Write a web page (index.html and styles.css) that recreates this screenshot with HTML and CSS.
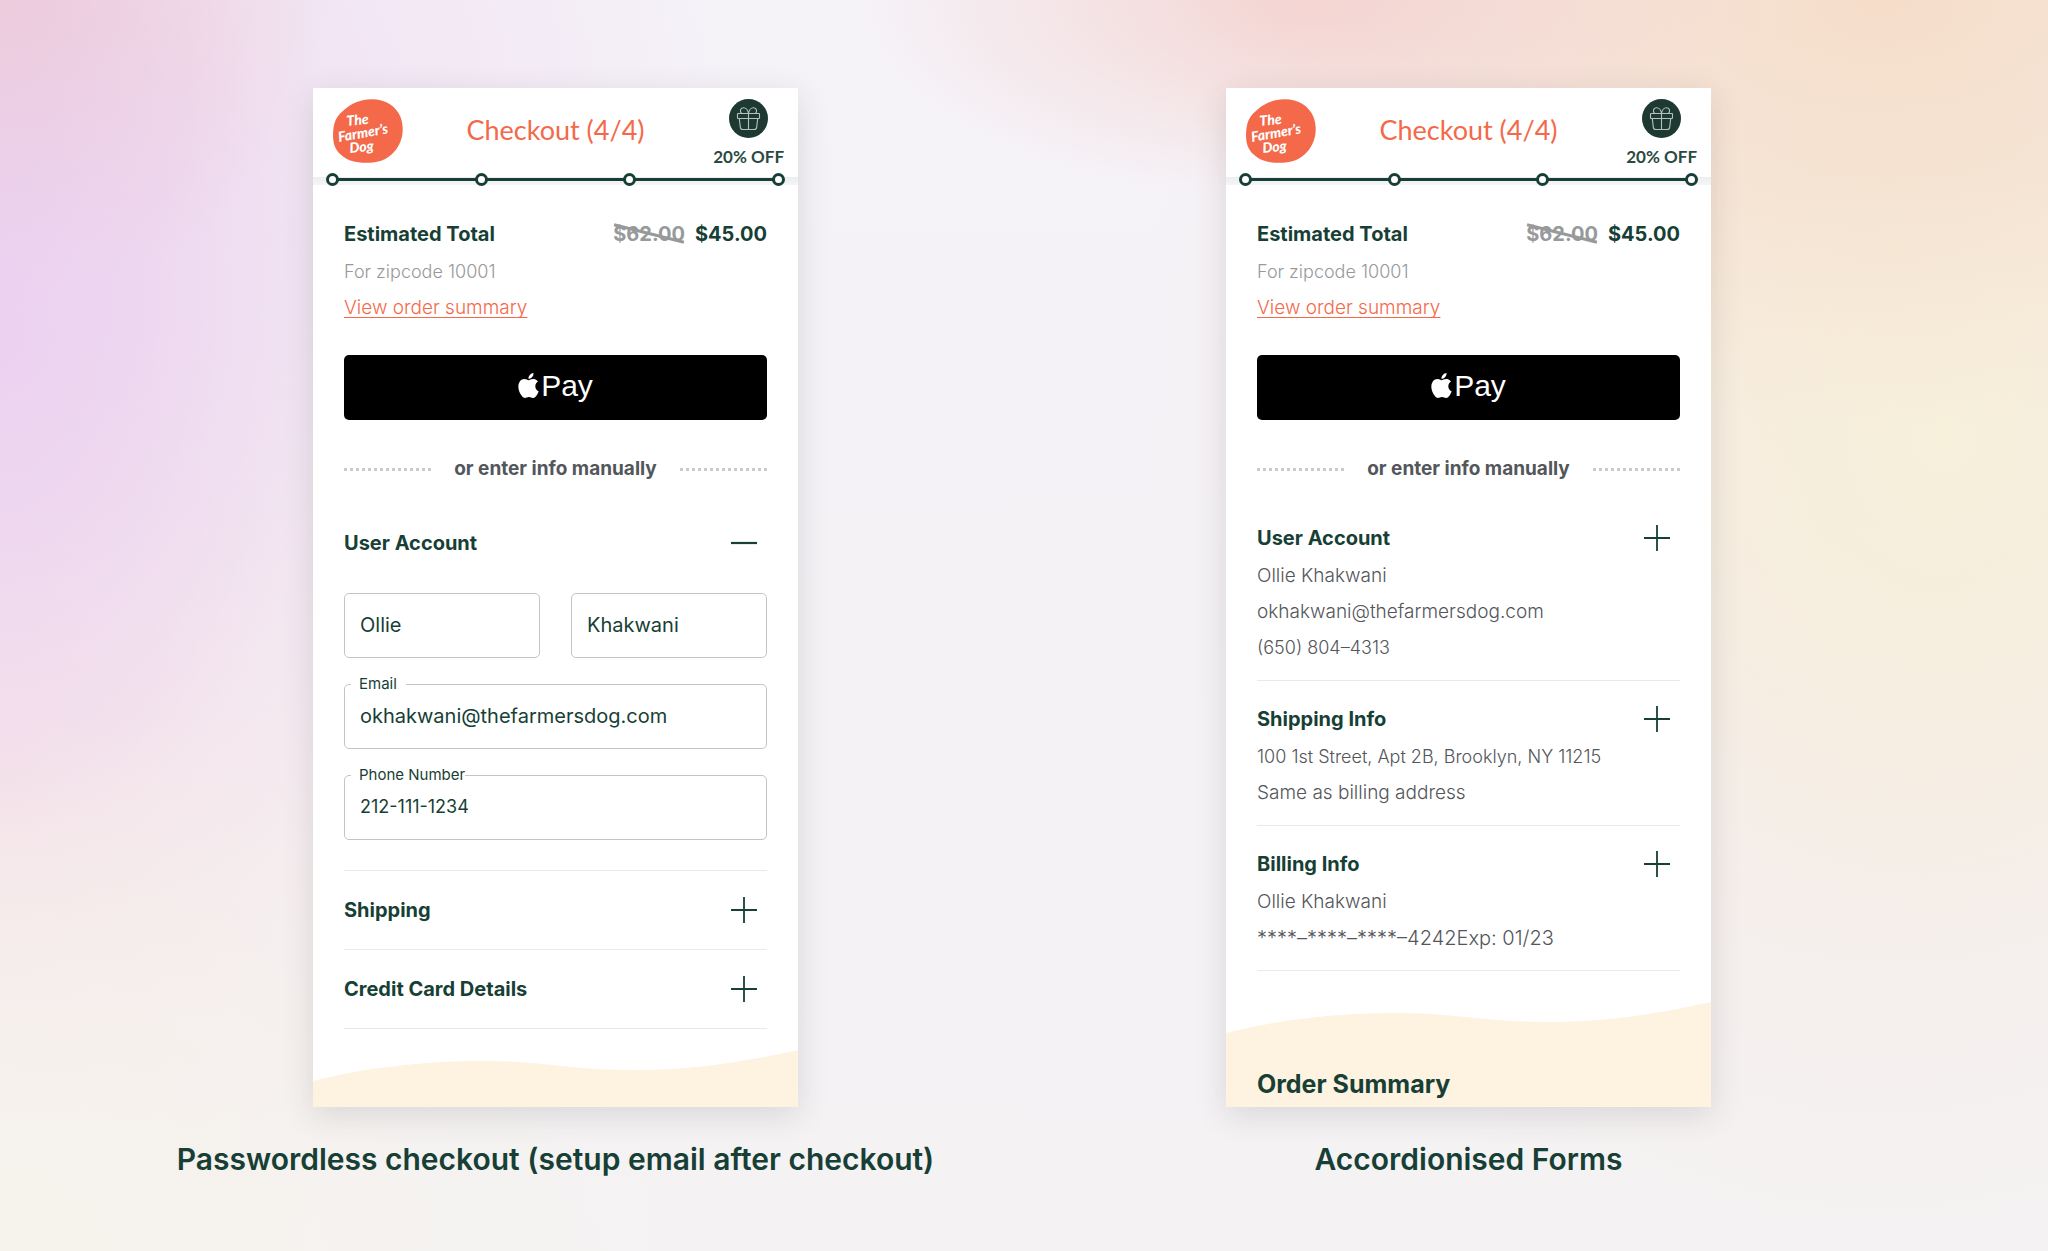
FILE: index.html
```
<!DOCTYPE html>
<html lang="en">

<head>
    <meta charset="UTF-8">
    <meta name="viewport" content="width=device-width, initial-scale=1.0">
    <title>Checkout</title>
    <link rel="stylesheet" href="styles.css">
</head>

<body>
    <!-- shared icons -->
    <svg class="sprite" aria-hidden="true">
        <symbol id="gift" viewBox="0 0 39 39">
            <circle cx="19.5" cy="19.5" r="19.5" fill="#1e3932" />
            <g fill="none" stroke="#b4c2bc" stroke-width="1.1" stroke-linejoin="round">
                <rect x="8.5" y="14.5" width="22" height="5" rx="0.6" />
                <path d="M10.3 19.5l1 8.6c.2 1.8 1 2.4 2.6 2.4h11.2c1.6 0 2.4-.6 2.6-2.4l1-8.6" />
                <path d="M19.5 14.5v16" />
                <path d="M19.5 14.3c-.5-3-2.5-5.8-5.2-5.6-2.9.2-3.8 3.3-1.8 5.6M19.5 14.3c.5-3 2.5-5.8 5.2-5.6 2.9.2 3.8 3.3 1.8 5.6" />
            </g>
        </symbol>
        <symbol id="apple" viewBox="2 0 20 24">
            <path fill="#fff" d="M12.152 6.896c-.948 0-2.415-1.078-3.96-1.04-2.04.027-3.91 1.183-4.961 3.014-2.117 3.675-.546 9.103 1.519 12.09 1.013 1.454 2.208 3.09 3.792 3.039 1.52-.065 2.09-.987 3.935-.987 1.831 0 2.35.987 3.96.948 1.637-.026 2.676-1.48 3.676-2.948 1.156-1.688 1.636-3.325 1.662-3.415-.039-.013-3.182-1.221-3.22-4.857-.026-3.04 2.48-4.494 2.597-4.559-1.429-2.09-3.623-2.324-4.39-2.376-2-.156-3.675 1.09-4.61 1.09zM15.53 3.83c.843-1.012 1.4-2.427 1.245-3.83-1.207.052-2.662.805-3.532 1.818-.78.896-1.454 2.338-1.273 3.714 1.338.104 2.715-.688 3.559-1.701" />
        </symbol>
        <symbol id="plus" viewBox="0 0 26 26">
            <path d="M0 13h26M13 0v26" stroke="#173f35" stroke-width="1.8" />
        </symbol>
        <symbol id="minus" viewBox="0 0 26 26">
            <path d="M0 13h26" stroke="#173f35" stroke-width="2.2" />
        </symbol>
        <symbol id="wave" viewBox="0 0 485 31" preserveAspectRatio="none">
            <path d="M0 31C50 18 110 11 170 11C205 11 228 14 250 16C275 19 300 20 325 20C385 20 440 10 485 0V31z" fill="#fef2e0" />
        </symbol>
    </svg>

    <main class="board">
        <section class="screen">
            <div class="card">
                <header class="top">
                    <div class="top-row">
                        <svg class="logo" viewBox="0 0 70 64">
                            <path d="M38 .3C52 0 63 7 67.5 18c4.5 12 2 26-6.5 35-7 8-16 10.800-28 10.800-10 0-19-2-25-8C1 50-.5 42 .2 32 1 21 5 16 11 11 19 4 28 .6 38 .3z" fill="#f3694a" />
                            <g class="logo-text">
                                <text x="14" y="27" transform="rotate(-6 14 27)">The</text>
                                <text x="6" y="43" transform="rotate(-10 6 43)">Farmer’s</text>
                                <text x="17" y="54" transform="rotate(-6 17 54)">Dog</text>
                            </g>
                        </svg>
                        <h2 class="top-title">Checkout (4/4)</h2>
                        <div class="offer">
                            <svg class="offer-icon"><use href="#gift" /></svg>
                            <span class="offer-text">20% OFF</span>
                        </div>
                    </div>
                    <div class="progress">
                        <ol class="steps">
                            <li></li>
                            <li></li>
                            <li></li>
                            <li></li>
                        </ol>
                    </div>
                </header>

                <div class="content">
                    <div class="total">
                        <span>Estimated Total</span>
                        <span class="prices"><s class="old-price">$62.00</s><span>$45.00</span></span>
                    </div>
                    <p class="zip">For zipcode 10001</p>
                    <p class="line"><a class="summary-link" href="#">View order summary</a></p>
                    <button class="apple-pay" aria-label="Apple Pay"><svg class="apple"><use href="#apple" /></svg>Pay</button>
                    <div class="manual"><span>or enter info manually</span></div>

                    <form class="form">
                        <button type="button" class="toggle" aria-expanded="true">User Account<svg class="toggle-icon"><use href="#minus" /></svg></button>
                        <div class="fields">
                            <input class="box" type="text" aria-label="First name" value="Ollie">
                            <input class="box" type="text" aria-label="Last name" value="Khakwani">
                            <div class="field">
                                <label class="field-label email-label" for="email">Email</label>
                                <input class="box" type="email" id="email" value="okhakwani@thefarmersdog.com">
                            </div>
                            <div class="field">
                                <label class="field-label" for="phone">Phone Number</label>
                                <input class="box numeric" type="tel" id="phone" value="212-111-1234">
                            </div>
                        </div>
                        <div class="closed">
                            <button type="button" class="toggle" aria-expanded="false">Shipping<svg class="toggle-icon"><use href="#plus" /></svg></button>
                        </div>
                        <div class="closed closed-last">
                            <button type="button" class="toggle" aria-expanded="false">Credit Card Details<svg class="toggle-icon"><use href="#plus" /></svg></button>
                        </div>
                    </form>
                </div>

                <footer class="bottom bottom-short">
                    <svg class="wave"><use href="#wave" /></svg>
                    <div class="cream"></div>
                </footer>
            </div>
            <h1 class="caption">Passwordless checkout (setup email after checkout)</h1>
        </section>

        <section class="screen">
            <div class="card">
                <header class="top">
                    <div class="top-row">
                        <svg class="logo" viewBox="0 0 70 64">
                            <path d="M38 .3C52 0 63 7 67.5 18c4.5 12 2 26-6.5 35-7 8-16 10.800-28 10.800-10 0-19-2-25-8C1 50-.5 42 .2 32 1 21 5 16 11 11 19 4 28 .6 38 .3z" fill="#f3694a" />
                            <g class="logo-text">
                                <text x="14" y="27" transform="rotate(-6 14 27)">The</text>
                                <text x="6" y="43" transform="rotate(-10 6 43)">Farmer’s</text>
                                <text x="17" y="54" transform="rotate(-6 17 54)">Dog</text>
                            </g>
                        </svg>
                        <h2 class="top-title">Checkout (4/4)</h2>
                        <div class="offer">
                            <svg class="offer-icon"><use href="#gift" /></svg>
                            <span class="offer-text">20% OFF</span>
                        </div>
                    </div>
                    <div class="progress">
                        <ol class="steps">
                            <li></li>
                            <li></li>
                            <li></li>
                            <li></li>
                        </ol>
                    </div>
                </header>

                <div class="content">
                    <div class="total">
                        <span>Estimated Total</span>
                        <span class="prices"><s class="old-price">$62.00</s><span>$45.00</span></span>
                    </div>
                    <p class="zip">For zipcode 10001</p>
                    <p class="line"><a class="summary-link" href="#">View order summary</a></p>
                    <button class="apple-pay" aria-label="Apple Pay"><svg class="apple"><use href="#apple" /></svg>Pay</button>
                    <div class="manual"><span>or enter info manually</span></div>

                    <div class="accordion">
                        <div class="item">
                            <button class="toggle" aria-expanded="false">User Account<svg class="toggle-icon"><use href="#plus" /></svg></button>
                            <p class="line">Ollie Khakwani</p>
                            <p class="line">okhakwani@thefarmersdog.com</p>
                            <p class="line numeric">(650) 804–4313</p>
                        </div>
                        <div class="item">
                            <button class="toggle" aria-expanded="false">Shipping Info<svg class="toggle-icon"><use href="#plus" /></svg></button>
                            <p class="line numeric">100 1st Street, Apt 2B, Brooklyn, NY 11215</p>
                            <p class="line">Same as billing address</p>
                        </div>
                        <div class="item">
                            <button class="toggle" aria-expanded="false">Billing Info<svg class="toggle-icon"><use href="#plus" /></svg></button>
                            <p class="line">Ollie Khakwani</p>
                            <p class="line card-number">****–****–****–4242Exp: 01/23</p>
                        </div>
                    </div>
                </div>

                <footer class="bottom">
                    <svg class="wave"><use href="#wave" /></svg>
                    <div class="cream">
                        <h3 class="order-title">Order Summary</h3>
                    </div>
                </footer>
            </div>
            <h1 class="caption">Accordionised Forms</h1>
        </section>
    </main>
</body>

</html>
```
FILE: styles.css
```
* {
    box-sizing: border-box;
}

body {
    margin: 0;
    min-height: 100vh;
    font-family: Inter, "Liberation Sans", sans-serif;
    color: #173f35;
    background:
        radial-gradient(ellipse 16% 40% at 0% 27%, rgba(234, 205, 240, 0.75), rgba(234, 205, 240, 0) 100%),
        radial-gradient(ellipse 16% 24% at 0% 0%, rgba(237, 200, 210, 0.9), rgba(237, 200, 210, 0) 100%),
        radial-gradient(ellipse 36% 60% at 0% 14%, rgba(238, 216, 239, 0.95), rgba(238, 216, 239, 0) 100%),
        radial-gradient(ellipse 34% 44% at 0% 100%, rgba(246, 243, 236, 1), rgba(246, 243, 236, 0) 100%),
        radial-gradient(ellipse 24% 46% at 0% 62%, rgba(246, 226, 230, 0.9), rgba(246, 226, 230, 0) 100%),
        radial-gradient(ellipse 22% 16% at 64% 0%, rgba(244, 210, 207, 0.9), rgba(244, 210, 207, 0) 100%),
        radial-gradient(ellipse 36% 34% at 92% 0%, rgba(245, 220, 200, 0.95), rgba(245, 220, 200, 0) 100%),
        radial-gradient(ellipse 22% 42% at 95% 35%, rgba(247, 240, 219, 1), rgba(247, 240, 219, 0) 100%),
        radial-gradient(ellipse 36% 75% at 92% 28%, rgba(246, 232, 220, 0.9), rgba(246, 232, 220, 0) 100%),
        linear-gradient(#f5f2f8, #f4f2f3);
}

h1,
h2,
h3,
p,
ol {
    margin: 0;
    padding: 0;
}

button,
input {
    font-family: inherit;
    color: inherit;
}

.sprite {
    display: none;
}

.board {
    display: grid;
    grid-template-columns: 1fr 1fr;
    padding: 88px 123px 60px 99px;
}

.screen {
    display: flex;
    flex-direction: column;
    align-items: center;
}

.card {
    width: 100%;
    max-width: 485px;
    flex: 1;
    display: flex;
    flex-direction: column;
    background-color: #fff;
    box-shadow: 0 8px 30px rgba(60, 50, 60, 0.14);
}

/* header */
.top-row {
    display: grid;
    grid-template-columns: 1fr auto 1fr;
    align-items: start;
    padding: 11px 14px 7px;
}

.logo {
    width: 70px;
    height: 64px;
    margin-left: 6px;
}

.logo-text {
    font: italic 900 14px Lato, sans-serif;
    fill: #fff;
}

.top-title {
    font: 400 27px/62px Lato, sans-serif;
    color: #f3694a;
}

.offer {
    justify-self: end;
    display: flex;
    flex-direction: column;
    align-items: center;
    gap: 10px;
}

.offer-icon {
    width: 39px;
    height: 39px;
}

.offer-text {
    font: 700 17px/18px Lato, sans-serif;
    color: #2a4a41;
}

.progress {
    padding: 0 13px;
    background: linear-gradient(transparent 4px, #eceef1 4px, #f5f5f5 12px, transparent 12px);
}

.steps {
    display: flex;
    justify-content: space-between;
    list-style: none;
    background: linear-gradient(#173f35, #173f35) center / calc(100% - 12px) 3px no-repeat;
}

.steps li {
    width: 13px;
    height: 13px;
    border: 3px solid #173f35;
    border-radius: 50%;
    background-color: #fff;
}

/* price and payment */
.content {
    padding: 30px 31px 0;
}

.total {
    display: flex;
    justify-content: space-between;
    font-size: 20px;
    font-weight: 700;
    line-height: 36px;
    margin-bottom: 2px;
}

.prices {
    display: flex;
    gap: 10px;
}

.old-price {
    position: relative;
    color: #97999b;
    text-decoration: none;
}

.old-price::after {
    content: "";
    position: absolute;
    left: 0;
    top: 16px;
    width: 100%;
    border-top: 3px solid #97999b;
    transform: rotate(14deg);
}

.line,
.zip {
    font-size: 19px;
    font-weight: 300;
    line-height: 36px;
    color: #53565a;
}

.zip {
    font-size: 18px;
    color: #97999b;
}

.line.numeric {
    font-size: 18px;
}

.line.card-number {
    font-size: 20px;
}

.summary-link {
    color: #f3694a;
    text-decoration-thickness: 1px;
    text-underline-offset: 3px;
    text-decoration-skip-ink: none;
}

.apple-pay {
    display: flex;
    justify-content: center;
    align-items: center;
    gap: 2px;
    width: 100%;
    height: 65px;
    margin-top: 29px;
    padding: 0 0 4px;
    border: none;
    border-radius: 5px;
    background-color: #000;
    color: #fff;
    font: 30px "Liberation Sans", sans-serif;
}

.apple {
    width: 21px;
    height: 25px;
}

.manual {
    display: flex;
    justify-content: space-between;
    align-items: center;
    margin-top: 31px;
    font-size: 19px;
    font-weight: 700;
    line-height: 36px;
    color: #53565a;
}

.manual::before,
.manual::after {
    content: "";
    width: 87px;
    height: 3px;
    background: repeating-linear-gradient(90deg, #cbcbcb 0 3px, transparent 3px 6px);
}

/* sections */
.toggle {
    display: flex;
    justify-content: space-between;
    align-items: center;
    width: 100%;
    padding: 0 10px 0 0;
    border: none;
    background: none;
    font-size: 20px;
    font-weight: 700;
    line-height: 36px;
    text-align: left;
}

.toggle-icon {
    width: 26px;
    height: 26px;
}

.form {
    margin-top: 38px;
}

.fields {
    display: grid;
    grid-template-columns: 1fr 1fr;
    gap: 26px 31px;
    padding: 32px 0 30px;
}

.field {
    position: relative;
    grid-column: span 2;
}

.box {
    width: 100%;
    height: 65px;
    padding: 0 15px 2px;
    border: 1px solid #c4c4c4;
    border-radius: 5px;
    background-color: #fff;
    font-size: 20px;
}

.box.numeric {
    font-size: 18px;
}

.field-label {
    position: absolute;
    left: 7px;
    top: -9px;
    padding-left: 8px;
    background-color: #fff;
    font-size: 15px;
    line-height: 18px;
}

.email-label {
    padding-right: 9px;
}

.closed {
    padding: 21px 0;
    border-top: 1px solid #e9e9e9;
}

.closed-last {
    border-bottom: 1px solid #e9e9e9;
}

.accordion {
    margin-top: 33px;
}

.item {
    padding-bottom: 14px;
    margin-bottom: 20px;
    border-bottom: 1px solid #e9e9e9;
}

.item:last-child {
    margin-bottom: 0;
}

.item .toggle {
    margin-bottom: 2px;
}

/* footer */
.bottom {
    flex: 1;
    display: flex;
    flex-direction: column;
    margin-top: 31px;
}

.bottom-short {
    margin-top: 21px;
}

.wave {
    width: 100%;
    height: 31px;
}

.cream {
    flex: 1;
    padding: 33px 31px 5px;
    background-color: #fef2e0;
}

.bottom-short .cream {
    padding: 0;
}

.order-title {
    font-size: 25px;
    font-weight: 700;
    line-height: 36px;
}

.caption {
    margin-top: 32px;
    font-size: 30px;
    font-weight: 600;
    line-height: 40px;
    text-align: center;
}
```
